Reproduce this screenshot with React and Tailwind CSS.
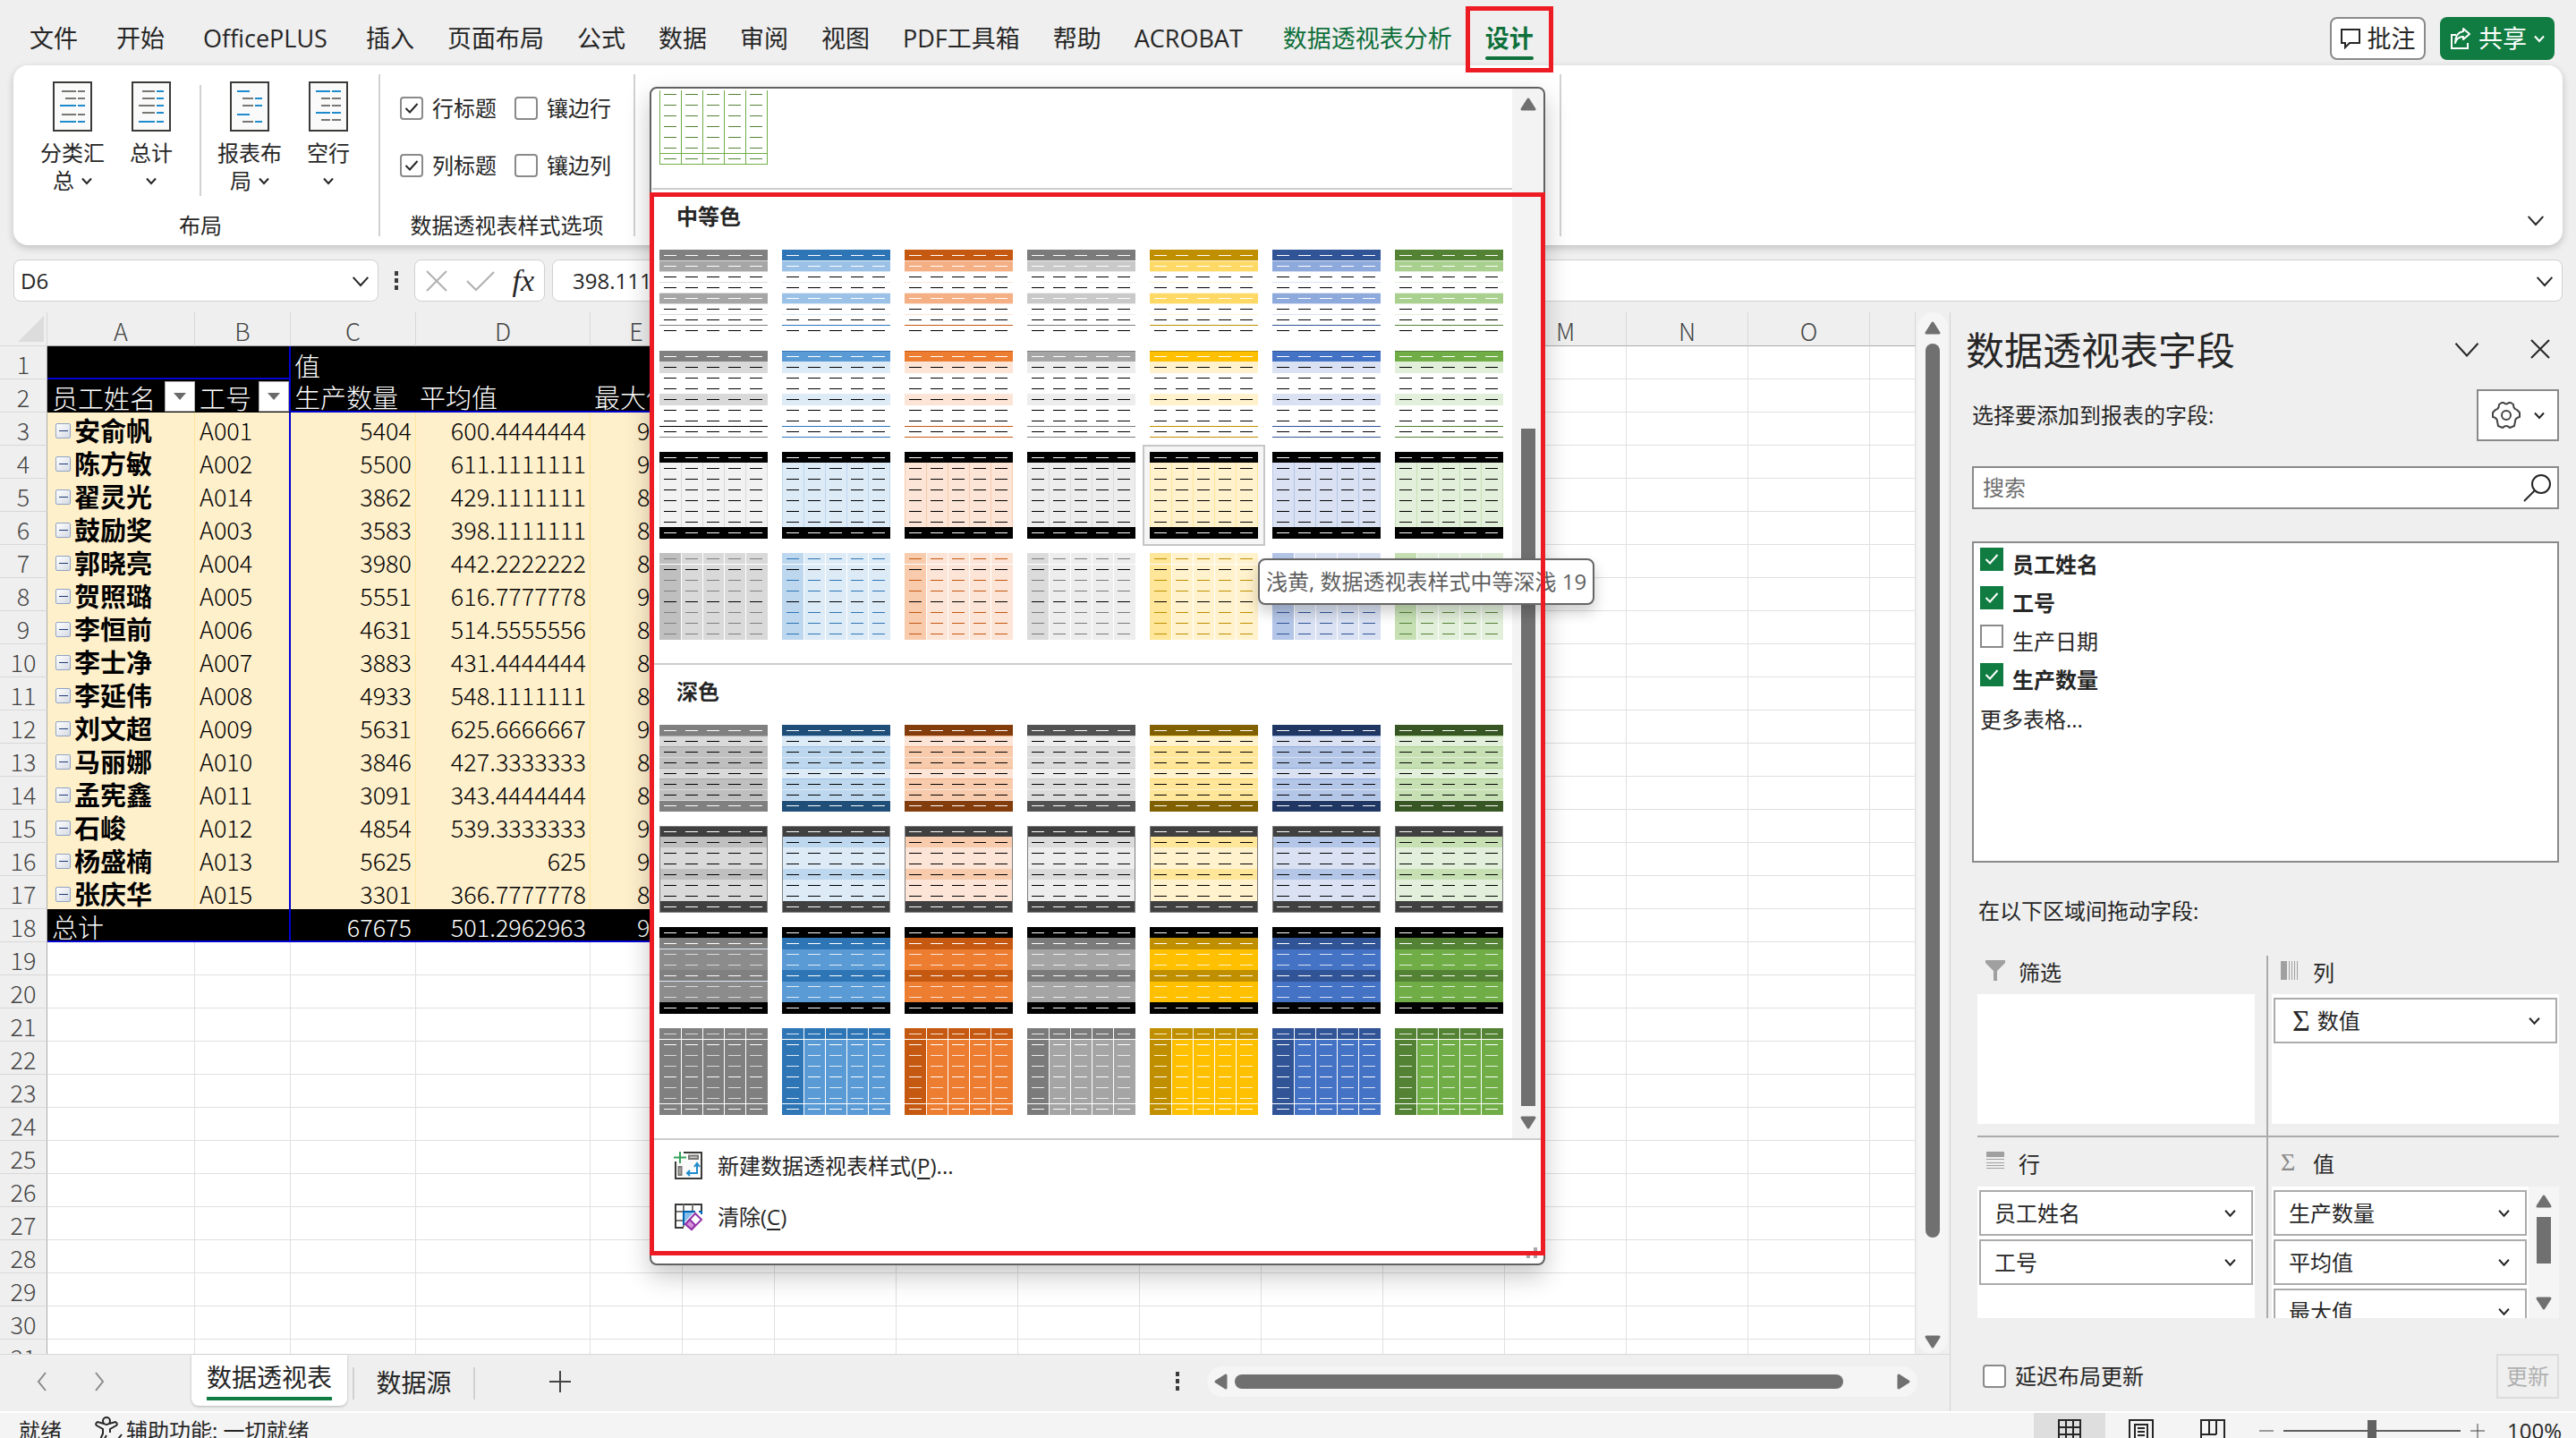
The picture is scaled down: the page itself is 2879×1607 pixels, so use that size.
import clsx from "clsx";

const TABS_LEFT = ["文件", "开始", "OfficePLUS"];
const TABS_RIGHT = ["插入", "页面布局", "公式", "数据", "审阅", "视图", "PDF工具箱", "帮助", "ACROBAT"];

const COLUMNS = [
  { name: "A", width: "w-[165px]" },
  { name: "B", width: "w-[107px]" },
  { name: "C", width: "w-[140px]" },
  { name: "D", width: "w-[195px]" },
  { name: "E", width: "w-[103px]" },
  { name: "F", width: "w-[103px]" },
  { name: "G", width: "w-[136px]" },
  { name: "H", width: "w-[136px]" },
  { name: "I", width: "w-[136px]" },
  { name: "J", width: "w-[136px]" },
  { name: "K", width: "w-[136px]" },
  { name: "L", width: "w-[136px]" },
  { name: "M", width: "w-[136px]" },
  { name: "N", width: "w-[136px]" },
  { name: "O", width: "w-[136px]" },
  { name: "", width: "" },
];

const STAFF = [
  ["安俞帆", "A001", "5404", "600.4444444", "9"],
  ["陈方敏", "A002", "5500", "611.1111111", "9"],
  ["翟灵光", "A014", "3862", "429.1111111", "8"],
  ["鼓励奖", "A003", "3583", "398.1111111", "8"],
  ["郭晓亮", "A004", "3980", "442.2222222", "8"],
  ["贺照璐", "A005", "5551", "616.7777778", "9"],
  ["李恒前", "A006", "4631", "514.5555556", "8"],
  ["李士净", "A007", "3883", "431.4444444", "8"],
  ["李延伟", "A008", "4933", "548.1111111", "8"],
  ["刘文超", "A009", "5631", "625.6666667", "9"],
  ["马丽娜", "A010", "3846", "427.3333333", "8"],
  ["孟宪鑫", "A011", "3091", "343.4444444", "8"],
  ["石峻", "A012", "4854", "539.3333333", "9"],
  ["杨盛楠", "A013", "5625", "625", "9"],
  ["张庆华", "A015", "3301", "366.7777778", "8"],
];

const EMPTY_ROWS = [19, 20, 21, 22, 23, 24, 25, 26, 27, 28, 29, 30, 31];

const THEMES = [
  { name: "灰", base: "#808080", dark: "#808080", mid: "#a6a6a6", light: "#bfbfbf", pale: "#d9d9d9", deep: "#808080", mono: true },
  { name: "蓝", base: "#5b9bd5", dark: "#2e75b6", mid: "#9bc2e6", light: "#bdd7ee", pale: "#ddebf7", deep: "#1f4e78" },
  { name: "橙", base: "#ed7d31", dark: "#c65911", mid: "#f4b084", light: "#f8cbad", pale: "#fce4d6", deep: "#833c0c" },
  { name: "浅灰", base: "#a5a5a5", dark: "#7b7b7b", mid: "#c9c9c9", light: "#dbdbdb", pale: "#ededed", deep: "#525252" },
  { name: "黄", base: "#ffc000", dark: "#bf8f00", mid: "#ffd966", light: "#ffe699", pale: "#fff2cc", deep: "#806000" },
  { name: "深蓝", base: "#4472c4", dark: "#305496", mid: "#8ea9db", light: "#b4c6e7", pale: "#d9e1f2", deep: "#203764" },
  { name: "绿", base: "#70ad47", dark: "#548235", mid: "#a9d08e", light: "#c6e0b4", pale: "#e2efda", deep: "#375623" },
];

const bar = (y, h, fill) => ({ x: 0, y, w: 121, h, fill });
const line = (y, fill) => bar(y, 1, fill);
const column = (x, y, h, fill) => ({ x, y, w: 1, h, fill });

// Each style gives the filled shapes and the dash colour for a row
const STYLES = {
  medium1: (c) => ({
    shapes: [
      bar(0, 12, c.dark),
      bar(13, 11, c.mid),
      bar(49, 11, c.mid),
      ...[12, 24, 36, 48, 60, 72].map((y) => line(y, c.pale)),
      line(84, c.dark),
    ],
    dash: (r) => ([0, 1, 4].includes(r) ? "#fff" : "#000"),
  }),
  medium2: (c) => ({
    shapes: [
      bar(0, 12, c.base),
      line(0, c.dark),
      bar(12, 13, c.pale),
      bar(48, 13, c.pale),
      line(84, c.mono ? "#000" : c.dark),
      line(96, c.dark),
    ],
    dash: (r) => (r === 0 ? "#fff" : "#000"),
  }),
  medium3: (c) => ({
    shapes: [
      bar(12, 72, c.mono ? "#f2f2f2" : c.pale),
      ...[0, 24, 48, 72, 96, 120].map((x) => column(x, 12, 72, c.mono ? c.pale : c.light)),
      bar(0, 12, "#000"),
      bar(84, 13, "#000"),
    ],
    dash: (r) => (r === 0 || r === 7 ? "#fff" : "#000"),
  }),
  medium4: (c) => ({
    shapes: [
      bar(0, 97, c.pale),
      { x: 0, y: 0, w: 24, h: 97, fill: c.light },
      ...[24, 48, 72, 96].map((x) => column(x, 0, 97, "#fff")),
      line(12, "#fff"),
    ],
    dash: (r) => (r === 1 || r === 4 ? "#000" : c.dark),
  }),
  dark1: (c) => ({
    shapes: [
      bar(12, 72, c.light),
      bar(12, 12, c.pale),
      bar(48, 12, c.pale),
      ...[12, 24, 48, 60].map((y) => line(y, c.mid)),
      ...[36, 72, 84].map((y) => line(y, c.pale)),
      bar(0, 12, c.deep),
      bar(85, 12, c.deep),
    ],
    dash: (r) => (r === 0 || r === 7 ? "#fff" : "#000"),
  }),
  dark2: (c) => ({
    shapes: [
      bar(0, 97, "#7f7f7f"),
      ...[
        [1, 11, "#404040"],
        [12, 12, c.light],
        [24, 24, c.pale],
        [48, 12, c.light],
        [60, 24, c.pale],
        [84, 12, "#404040"],
      ].map(([y, h, fill]) => ({ x: 1, y, w: 119, h, fill })),
    ],
    dash: (r) => (r === 0 || r === 7 ? "#fff" : "#000"),
  }),
  dark3: (c) => ({
    shapes: [
      bar(12, 72, c.mono ? "#8c8c8c" : c.base),
      bar(12, 13, c.dark),
      bar(48, 13, c.dark),
      ...(c.mono ? [line(24, "#ddebf7"), line(60, "#ddebf7")] : []),
      bar(0, 12, "#000"),
      bar(84, 13, "#000"),
    ],
    dash: (r) => ([0, 1, 4, 7].includes(r) ? "#fff" : c.pale),
  }),
  dark4: (c) => ({
    shapes: [
      bar(0, 97, c.base),
      bar(0, 12, c.dark),
      { x: 0, y: 0, w: 24, h: 97, fill: c.dark },
      ...[24, 48, 72, 96].map((x) => column(x, 0, 97, "#fff")),
      line(12, "#fff"),
      line(84, "#fff"),
    ],
    dash: (r) => ([1, 4, 7].includes(r) ? "#fff" : c.pale),
  }),
};

function Thumb({ style, theme }) {
  const { shapes, dash } = STYLES[style](theme);
  return (
    <svg width="121" height="97" viewBox="0 0 121 97" shapeRendering="crispEdges" aria-hidden="true">
      {shapes.map((s, i) => (
        <rect key={i} x={s.x} y={s.y} width={s.w} height={s.h} fill={s.fill} />
      ))}
      {[0, 1, 2, 3, 4, 5, 6, 7].map((r) =>
        [0, 1, 2, 3, 4].map((c) => (
          <rect key={`${r}-${c}`} x={5 + c * 24} y={6 + r * 12} width="14" height="1" fill={dash(r)} />
        ))
      )}
    </svg>
  );
}

// Last row of the light section, scrolled partly out of view
function LightThumb() {
  return (
    <svg width="121" height="83" viewBox="0 14 121 83" shapeRendering="crispEdges" aria-hidden="true">
      {[0, 24, 48, 72, 96, 120].map((x) => (
        <rect key={x} x={x} y="14" width="1" height="83" fill="#70ad47" />
      ))}
      <rect x="0" y="84" width="121" height="1" fill="#70ad47" />
      <rect x="0" y="96" width="121" height="1" fill="#70ad47" />
      {[1, 2, 3, 4, 5, 6, 7].map((r) =>
        [0, 1, 2, 3, 4].map((c) => (
          <rect key={`${r}-${c}`} x={5 + c * 24} y={6 + r * 12} width="14" height="1" fill="#548235" />
        ))
      )}
    </svg>
  );
}

function Chevron({ size = 12, stroke = 2, className }) {
  return (
    <svg width={size} height={size} viewBox="0 0 12 12" fill="none" className={className} aria-hidden="true">
      <path d="M1 3.5 6 9 11 3.5" stroke="currentColor" strokeWidth={(stroke * 12) / size} />
    </svg>
  );
}

function Triangle({ down, left, right }) {
  return (
    <svg
      width="20"
      height="20"
      viewBox="0 0 20 20"
      className={clsx("shrink-0", down && "rotate-180", left && "-rotate-90", right && "rotate-90")}
      aria-hidden="true"
    >
      <path d="M10 4 17 15H3Z" fill="#707070" stroke="#707070" strokeWidth="3" strokeLinejoin="round" />
    </svg>
  );
}

function Dots() {
  return (
    <svg width="6" height="22" viewBox="0 0 6 22" fill="#3b3b3b" aria-hidden="true">
      <rect x="1" y="0" width="4" height="5" />
      <rect x="1" y="8" width="4" height="5" />
      <rect x="1" y="16" width="4" height="5" />
    </svg>
  );
}

function CheckOption({ id, label, checked, bold, square }) {
  return (
    <div className={clsx("flex gap-[10px]", square ? "items-start" : "items-center")}>
      <span className={clsx("grid size-[26px] shrink-0 place-items-center", square && "mt-[5px]")}>
        <input
          id={id}
          type="checkbox"
          defaultChecked={checked}
          className={clsx(
            "col-start-1 row-start-1 size-[26px] appearance-none border-2 border-[#8a8a8a] bg-white",
            square ? "rounded-none checked:border-[#107c41] checked:bg-[#107c41]" : "rounded-[4px]"
          )}
        />
        {checked && (
          <svg
            width="16"
            height="16"
            viewBox="0 0 16 16"
            fill="none"
            className={clsx("pointer-events-none col-start-1 row-start-1", square ? "text-white" : "text-[#262626]")}
            aria-hidden="true"
          >
            <path d="M1.500 8 6 12.500 14.500 3" stroke="currentColor" strokeWidth="2" />
          </svg>
        )}
      </span>
      <label htmlFor={id} className={clsx("text-2xl leading-8 whitespace-nowrap", bold && "font-bold", square && "pt-2")}>
        {label}
      </label>
    </div>
  );
}

const G = "#797774";
const B = "#1e8bcd";
const LAYOUT_ICONS = {
  subtotal: [
    [10, 10, 16, G], [28, 10, 8, G],
    [14, 18, 12, G], [28, 18, 8, G],
    [8, 26, 18, B], [28, 26, 8, B],
    [10, 36, 16, G], [28, 36, 8, G],
    [8, 44, 18, B], [28, 44, 8, B],
  ],
  total: [
    [12, 10, 14, G], [28, 10, 8, B],
    [12, 18, 14, G], [28, 18, 8, B],
    [8, 26, 18, G], [28, 26, 8, B],
    [12, 34, 14, G], [28, 34, 8, B],
    [8, 44, 18, B], [28, 44, 8, B],
  ],
  report: [
    [8, 10, 14, B],
    [14, 18, 12, G], [28, 18, 8, B],
    [14, 26, 12, G], [28, 26, 8, B],
    [8, 36, 14, B],
    [14, 44, 12, G], [28, 44, 8, B],
  ],
  blank: [
    [8, 10, 16, B], [26, 10, 10, B],
    [14, 18, 10, G], [26, 18, 10, G],
    [14, 26, 10, G], [26, 26, 10, G],
    [8, 34, 16, B], [26, 34, 10, B],
    [14, 42, 10, G], [26, 42, 10, G],
  ],
};

function LayoutButton({ icon, first, second }) {
  return (
    <button className="flex w-[88px] flex-col items-center">
      <svg width="44" height="56" viewBox="0 0 44 56" shapeRendering="crispEdges" aria-hidden="true">
        <rect x="1" y="1" width="42" height="54" fill="#fafafa" stroke="#3a3a38" strokeWidth="2" />
        {LAYOUT_ICONS[icon].map(([x, y, w, fill], i) => (
          <rect key={i} x={x} y={y} width={w} height="2" fill={fill} />
        ))}
      </svg>
      <span className="mt-2 text-2xl leading-[31px]">{first}</span>
      <span className="flex h-[31px] items-center gap-2 text-2xl leading-[31px]">
        {second}
        <Chevron size={12} />
      </span>
    </button>
  );
}

function Tab({ children, active, tool }) {
  return (
    <button
      className={clsx(
        "relative h-12 text-[27px] leading-[48px] whitespace-nowrap",
        (tool || active) && "text-[#0f703b]",
        active && "font-bold"
      )}
    >
      {children}
      {active && <span className="absolute inset-x-0 bottom-0 h-1 rounded-full bg-[#0f703b]" />}
      {active && <span className="absolute -inset-x-[22px] -top-3 -bottom-[14px] border-[5px] border-[#ed1c24]" />}
    </button>
  );
}

function Header() {
  return (
    <header className="relative z-20 flex h-[73px] shrink-0 items-start pt-[19px] pr-6 pl-[33px]">
      <nav className="flex gap-[37px]">
        <div className="mr-[6px] flex gap-[43px]">
          {TABS_LEFT.map((t) => (
            <Tab key={t}>{t}</Tab>
          ))}
        </div>
        {TABS_RIGHT.map((t) => (
          <Tab key={t}>{t}</Tab>
        ))}
        <div className="ml-2 flex gap-[37px]">
          <Tab tool>数据透视表分析</Tab>
          <Tab active>设计</Tab>
        </div>
      </nav>
      <div className="ml-auto flex gap-4">
        <button className="flex h-12 w-[107px] items-center justify-center gap-2 rounded-lg border-2 border-[#8a8a8a] bg-white text-[27px] leading-8">
          <svg width="22" height="24" viewBox="0 0 22 24" fill="none" stroke="#262626" strokeWidth="2" aria-hidden="true">
            <path d="M1 2H21V17H10L5 22V17H1Z" />
          </svg>
          批注
        </button>
        <button className="flex h-12 w-[128px] items-center justify-center gap-2 rounded-lg bg-[#107c41] text-[27px] leading-8 text-white">
          <svg width="24" height="26" viewBox="0 0 24 26" fill="none" stroke="#fff" strokeWidth="2" aria-hidden="true">
            <path d="M7 9H2V24H20V18" />
            <path d="M15 2 22 8 15 14V11C10 11 7 14 6 18 6 11 9 6 15 5Z" strokeLinejoin="round" />
          </svg>
          共享
          <Chevron size={12} />
        </button>
      </div>
    </header>
  );
}

function GalleryTiles({ styles }) {
  return (
    <div className="grid w-[959px] grid-cols-7">
      {styles.map((style) =>
        THEMES.map((theme) => {
          const hovered = style === "medium3" && theme.name === "黄";
          return (
            <div key={style + theme.name} className="relative h-[113px]">
              <button
                aria-label={theme.name}
                className={clsx(
                  "flex size-full items-center justify-center border-2",
                  hovered ? "border-[#c6c6c6] bg-[#f5f5f5]" : "border-transparent"
                )}
              >
                <Thumb style={style} theme={theme} />
              </button>
              {hovered && (
                <div
                  role="tooltip"
                  className="absolute top-[127px] left-[129px] z-10 flex h-[52px] items-center rounded-lg border-2 border-[#666] bg-white px-[7px] text-2xl leading-8 whitespace-nowrap text-[#5f5f5f] shadow-[0_8px_16px_rgba(0,0,0,0.2)]"
                >
                  浅黄, 数据透视表样式中等深浅 19
                </div>
              )}
            </div>
          );
        })
      )}
    </div>
  );
}

function StyleGallery() {
  return (
    <div className="absolute top-6 left-4 z-20 w-[1001px] rounded-lg border-2 border-[#616161] bg-white pb-[22px] shadow-[0_12px_28px_rgba(0,0,0,0.22)]">
      <div className="flex">
        <div className="w-[962px] shrink-0 pl-[1px]">
          <div className="h-[113px] border-b-2 border-[#cdcdcd] pt-[2px] pl-2">
            <LightThumb />
          </div>
          <section className="border-b-2 border-[#cdcdcd] pb-[18px]">
            <h2 className="pl-[27px] text-2xl leading-[59px] font-bold">中等色</h2>
            <GalleryTiles styles={["medium1", "medium2", "medium3", "medium4"]} />
          </section>
          <section className="pb-[18px]">
            <h2 className="pl-[27px] text-2xl leading-[59px] font-bold">深色</h2>
            <GalleryTiles styles={["dark1", "dark2", "dark3", "dark4"]} />
          </section>
        </div>
        <div className="flex flex-1 flex-col items-center rounded-tr-lg bg-[#f3f3f3] py-2">
          <Triangle />
          <div className="mt-[352px] w-4 flex-1 bg-[#707070]" />
          <div className="mt-2 h-5">
            <Triangle down />
          </div>
        </div>
      </div>
      <div className="border-t-2 border-[#cdcdcd] pb-[2px]">
        <button className="flex h-[57px] w-full items-center gap-4 pl-[25px] text-2xl leading-8">
          <svg width="33" height="33" viewBox="0 0 33 33" fill="none" aria-hidden="true">
            <path d="M11 2H31V31H2V12" fill="#fafafa" stroke="#3a3a38" strokeWidth="2" />
            <path d="M7 1V14M0 7.500H14" stroke="#33a35a" strokeWidth="2" />
            <path d="M17 5.500H27V9H17Z M5.500 18V27H8.500V18Z" fill="#d0cecb" stroke="#797774" strokeWidth="2" />
            <path d="M26 15V25H16M23 18 26 14 29 18M18 22 15 25 18 28" stroke="#1e8bcd" strokeWidth="2" />
          </svg>
          <span>
            新建数据透视表样式(<u className="underline-offset-4">P</u>)...
          </span>
        </button>
        <button className="flex h-[57px] w-full items-center gap-4 pl-[25px] text-2xl leading-8">
          <svg width="33" height="33" viewBox="0 0 33 33" fill="none" aria-hidden="true">
            <path d="M2 3H31V12M2 2V29H11" stroke="#3a3a38" strokeWidth="2" />
            <path d="M11 3V28M21 3V11M3 11H11M3 21H11" stroke="#797774" strokeWidth="2" />
            <path d="M11 11H23L11 24Z" fill="#83beec" />
            <path d="M11 26V11H24M28 11H31V14" stroke="#0063b1" strokeWidth="2" />
            <path d="M24 13 31 20 20 31 13 25Z" fill="#fff" stroke="#9332a8" strokeWidth="2" />
            <path d="M18 20 24 26 20 31 13 25Z" fill="#d492d8" stroke="#9332a8" strokeWidth="2" />
          </svg>
          <span>
            清除(<u className="underline-offset-4">C</u>)
          </span>
        </button>
      </div>
      <svg width="12" height="12" viewBox="0 0 12 12" fill="#a6a6a6" className="absolute right-[7px] bottom-[6px]" aria-hidden="true">
        <rect x="8" y="0" width="4" height="4" />
        <rect x="8" y="8" width="4" height="4" />
        <rect x="0" y="8" width="4" height="4" />
      </svg>
      {/* Highlight frame */}
      <div className="pointer-events-none absolute -inset-x-[2px] top-[116px] bottom-[9px] z-20 border-[5px] border-[#ed1c24]" />
    </div>
  );
}

function Ribbon() {
  return (
    <section className="relative z-10 mx-[15px] flex h-[201px] shrink-0 rounded-2xl bg-white shadow-[0_3px_8px_rgba(0,0,0,0.2)]">
      <div className="flex flex-col justify-between pt-[18px] pr-3 pb-[6px] pl-[22px]">
        <div className="flex">
          <LayoutButton icon="subtotal" first="分类汇" second="总" />
          <LayoutButton icon="total" first="总计" />
          <div className="mx-[10px] mt-1 h-[124px] w-[2px] bg-[#d1d1d1]" />
          <LayoutButton icon="report" first="报表布" second="局" />
          <LayoutButton icon="blank" first="空行" />
        </div>
        <p className="text-center text-2xl leading-8">布局</p>
      </div>
      <div className="my-[10px] w-[2px] bg-[#d1d1d1]" />
      <div className="flex w-[283px] flex-col justify-between pt-8 pb-[6px]">
        <div className="grid grid-cols-[128px_1fr] gap-y-8 pl-[22px]">
          <CheckOption id="row-header" label="行标题" checked />
          <CheckOption id="banded-row" label="镶边行" />
          <CheckOption id="col-header" label="列标题" checked />
          <CheckOption id="banded-col" label="镶边列" />
        </div>
        <p className="text-center text-2xl leading-8">数据透视表样式选项</p>
      </div>
      <div className="my-[10px] w-[2px] bg-[#d1d1d1]" />
      <div className="relative w-[1033px]">
        <StyleGallery />
      </div>
      <div className="my-[10px] w-[2px] bg-[#d1d1d1]" />
      <button aria-label="折叠功能区" className="mt-auto mr-5 mb-[18px] ml-auto">
        <Chevron size={20} />
      </button>
    </section>
  );
}

function FormulaBar() {
  return (
    <div className="mx-[15px] mt-4 flex h-[47px] shrink-0 items-stretch">
      <div className="flex w-[408px] items-center rounded-lg border border-[#d1d1d1] bg-white pr-[9px] pl-[7px]">
        <input aria-label="名称框" defaultValue="D6" className="min-w-0 flex-1 text-2xl leading-8 outline-none" />
        <Chevron size={20} />
      </div>
      <div className="flex w-10 items-center justify-center">
        <Dots />
      </div>
      <div className="flex w-[146px] items-center justify-between rounded-lg border border-[#d1d1d1] bg-white px-[11px]">
        <button aria-label="取消">
          <svg width="26" height="26" viewBox="0 0 26 26" stroke="#b0b0b0" strokeWidth="2" aria-hidden="true">
            <path d="M2 2 24 24M24 2 2 24" />
          </svg>
        </button>
        <button aria-label="输入">
          <svg width="32" height="26" viewBox="0 0 32 26" fill="none" stroke="#b0b0b0" strokeWidth="2" aria-hidden="true">
            <path d="M1 13 11 23 31 3" />
          </svg>
        </button>
        <button className="font-['Liberation_Serif',serif] text-[34px] leading-9 text-[#262626] italic">fx</button>
      </div>
      <div className="ml-2 flex flex-1 items-center rounded-lg border border-[#d1d1d1] bg-white pr-[9px] pl-[22px]">
        <input aria-label="编辑栏" defaultValue="398.111111111111" className="min-w-0 flex-1 text-2xl leading-8 outline-none" />
        <Chevron size={20} />
      </div>
    </div>
  );
}

function RowHead({ n }) {
  return (
    <th className="border-r border-b border-r-[#ababab] border-b-[#d8d8d8] bg-[#efefef] p-0 pt-1 text-center leading-8 font-light text-[#444]">
      {n}
    </th>
  );
}

function Blanks({ count }) {
  return Array.from({ length: count }, (_, i) => (
    <td key={i} className="border-r border-b border-[#e0e0e0] bg-white p-0" />
  ));
}

function FilterHead({ label, last }) {
  return (
    <td className={clsx("border-b border-b-black p-0 pl-[5px]", last && "border-r-2 border-r-[#0000d0]")}>
      <div className="flex h-9 items-end justify-between">
        <span className="text-[29px] leading-8">{label}</span>
        <button aria-label={`筛选${label}`} className="flex size-[34px] items-center justify-center border border-[#ababab] bg-white">
          <svg width="14" height="8" viewBox="0 0 14 8" fill="#6a6a6a" aria-hidden="true">
            <path d="M0 0H14L7 8Z" />
          </svg>
        </button>
      </div>
    </td>
  );
}

function Sheet() {
  return (
    <div className="min-w-0 flex-1 overflow-hidden bg-white">
      <table className="w-full table-fixed border-separate border-spacing-0 font-['Noto_Sans_CJK_SC',sans-serif] text-[27px] font-light">
        <colgroup>
          <col className="w-[53px]" />
          {COLUMNS.map((c, i) => (
            <col key={i} className={c.width} />
          ))}
        </colgroup>
        <thead>
          <tr className="h-[38px] bg-[#efefef] text-[#444]">
            <th className="border-r border-b border-r-[#d8d8d8] border-b-[#d8d8d8] p-0">
              <svg width="30" height="29" viewBox="0 0 30 29" className="ml-5" fill="#dcdcdc" aria-hidden="true">
                <path d="M29 0V29H0Z" />
              </svg>
            </th>
            {COLUMNS.map((c, i) => (
              <th key={i} className="border-r border-b border-r-[#d8d8d8] border-b-[#ababab] p-0 pt-1 leading-8 font-light">
                {c.name}
              </th>
            ))}
          </tr>
        </thead>
        <tbody>
          <tr className="h-[37px] bg-black text-white">
            <RowHead n={1} />
            <td className="border-b-2 border-[#0000d0] p-0" />
            <td className="border-r-2 border-b-2 border-[#0000d0] p-0" />
            <td className="p-0 pt-1 pl-1 text-[29px] leading-8">值</td>
            <td colSpan={2} className="p-0" />
            <Blanks count={11} />
          </tr>
          <tr className="h-[37px] bg-black text-white">
            <RowHead n={2} />
            <FilterHead label="员工姓名" />
            <FilterHead label="工号" last />
            <td className="border-b-2 border-[#0000d0] p-0 pt-1 pl-1 text-[29px] leading-[31px]">生产数量</td>
            <td className="border-b-2 border-[#0000d0] p-0 pt-1 pl-1 text-[29px] leading-[31px]">平均值</td>
            <td className="border-b-2 border-[#0000d0] p-0 pt-1 pl-1 text-[29px] leading-[31px]">最大值</td>
            <Blanks count={11} />
          </tr>
          {STAFF.map(([name, id, count, avg, max], i) => (
            <tr key={id} className="h-[37px] bg-[#fff0cc] text-black">
              <RowHead n={i + 3} />
              <td className="border-r border-[#ffe699] p-0 pl-[9px]">
                <div className="flex items-center gap-1">
                  <button
                    aria-label="折叠"
                    className="mt-1 flex size-[17px] items-center justify-center rounded-[2px] border border-[#8fa3c4] bg-linear-to-br from-white to-[#d5dae3]"
                  >
                    <span className="h-[1px] w-[10px] bg-[#1f3b78]" />
                  </button>
                  <span className="text-[29px] leading-8 font-bold">{name}</span>
                </div>
              </td>
              <td className="border-r-2 border-[#0000d0] p-0 pt-[2px] pl-[5px] leading-8">{id}</td>
              <td className="border-r border-[#ffe699] p-0 pt-[2px] pr-1 text-right leading-8">{count}</td>
              <td className="border-r border-[#ffe699] p-0 pt-[2px] pr-1 text-right leading-8">{avg}</td>
              <td className="p-0 pt-[2px] pl-[52px] leading-8">{max}</td>
              <Blanks count={11} />
            </tr>
          ))}
          <tr className="h-[37px] bg-black text-white">
            <RowHead n={18} />
            <td className="border-b-2 border-[#0000d0] p-0 pt-1 pl-[5px] text-[29px] leading-[31px]">总计</td>
            <td className="border-r-2 border-b-2 border-[#0000d0] p-0" />
            <td className="border-b-2 border-[#0000d0] p-0 pt-1 pr-[5px] text-right leading-[31px]">67675</td>
            <td className="border-b-2 border-[#0000d0] p-0 pt-1 pr-[5px] text-right leading-[31px]">501.2962963</td>
            <td className="border-b-2 border-[#0000d0] p-0 pt-1 pl-[52px] leading-[31px]">9</td>
            <Blanks count={11} />
          </tr>
          {EMPTY_ROWS.map((n) => (
            <tr key={n} className="h-[37px]">
              <RowHead n={n} />
              <Blanks count={16} />
            </tr>
          ))}
        </tbody>
      </table>
    </div>
  );
}

function SheetTabs() {
  return (
    <div className="flex h-16 shrink-0 border-t border-[#d8d8d8] bg-[#efefef]">
      <div className="flex w-[214px] items-center gap-[54px] pb-1 pl-[41px] text-[#8a8a8a]">
        <button aria-label="上一个工作表">
          <svg width="11" height="24" viewBox="0 0 11 24" fill="none" stroke="currentColor" strokeWidth="2" aria-hidden="true">
            <path d="M10 2 2 12 10 22" />
          </svg>
        </button>
        <button aria-label="下一个工作表">
          <svg width="11" height="24" viewBox="0 0 11 24" fill="none" stroke="currentColor" strokeWidth="2" aria-hidden="true">
            <path d="M1 2 9 12 1 22" />
          </svg>
        </button>
      </div>
      <button className="h-[57px] rounded-b-lg bg-white px-[17px] shadow-[0_1px_3px_rgba(0,0,0,0.25)]">
        <span className="block border-b-4 border-[#107c41] pb-1 text-[28px] leading-9">数据透视表</span>
      </button>
      <div className="mt-[14px] ml-[6px] h-9 w-[2px] bg-[#d1d1d1]" />
      <button className="h-[62px] w-[133px] text-[28px] leading-[62px]">数据源</button>
      <div className="mt-[14px] h-9 w-[2px] bg-[#d1d1d1]" />
      <button aria-label="新建工作表" className="mb-1 ml-[83px]">
        <svg width="24" height="24" viewBox="0 0 24 24" stroke="#444" strokeWidth="2" aria-hidden="true">
          <path d="M12 0V24M0 12H24" />
        </svg>
      </button>
      <div className="ml-auto flex items-center gap-[30px] pb-1">
        <Dots />
        <div className="mr-9 flex h-[34px] w-[794px] items-center rounded-full bg-[#f5f5f5] px-[6px]">
          <Triangle left />
          <div className="ml-[5px] h-4 w-[680px] rounded-full bg-[#707070]" />
          <div className="ml-auto h-5">
            <Triangle right />
          </div>
        </div>
      </div>
    </div>
  );
}

function FieldItem({ children }) {
  return (
    <button className="flex h-[51px] w-full shrink-0 items-center justify-between border-2 border-[#ababab] bg-white pr-[17px] pl-[15px] text-2xl leading-8">
      <span className="flex items-center gap-2">{children}</span>
      <Chevron size={13} />
    </button>
  );
}

function FieldPane() {
  return (
    <aside className="flex w-[700px] shrink-0 flex-col border-l border-[#d1d1d1] pr-[19px] pl-6 text-2xl">
      <div className="-ml-[7px] flex h-[86px] shrink-0 items-center pr-1">
        <h1 className="text-[43px] leading-[56px]">数据透视表字段</h1>
        <div className="mb-1 ml-auto flex items-center gap-14 pr-[6px]">
          <button aria-label="任务窗格选项">
            <Chevron size={30} />
          </button>
          <button aria-label="关闭">
            <svg width="22" height="22" viewBox="0 0 22 22" stroke="#262626" strokeWidth="2" aria-hidden="true">
              <path d="M1 1 21 21M21 1 1 21" />
            </svg>
          </button>
        </div>
      </div>
      <div className="flex h-[58px] shrink-0 items-center justify-between">
        <p className="leading-8">选择要添加到报表的字段:</p>
        <button aria-label="工具" className="flex h-[58px] w-[92px] items-center justify-center gap-[14px] border-2 border-[#8a8a8a] bg-white">
          <svg width="34" height="32" viewBox="0 0 34 32" fill="none" stroke="#444" strokeWidth="2" aria-hidden="true">
            <path d="M12 2H14Q17 5 20 2H22L25 4Q25 9 29 10L32 13V18Q27 19 27 23L26 28 21 30Q17 26 13 30L8 28 7 23Q7 19 2 18V13L5 10Q9 9 9 4Z" strokeLinejoin="round" />
            <circle cx="17" cy="16" r="5" />
          </svg>
          <Chevron size={12} />
        </button>
      </div>
      <div className="mt-7 flex h-12 shrink-0 items-center border-2 border-[#8a8a8a] bg-white pr-[6px] pl-[10px]">
        <input aria-label="搜索" placeholder="搜索" className="min-w-0 flex-1 text-2xl leading-8 outline-none placeholder:text-[#6e6e6e]" />
        <svg width="32" height="32" viewBox="0 0 32 32" fill="none" stroke="#262626" strokeWidth="2" aria-hidden="true">
          <circle cx="20" cy="12" r="10" />
          <path d="M13 19 1 31" />
        </svg>
      </div>
      <div className="mt-9 flex min-h-0 flex-1 flex-col border-2 border-[#8a8a8a] bg-white px-[7px]">
        {[
          ["f-name", "员工姓名", true],
          ["f-id", "工号", true],
          ["f-date", "生产日期", false],
          ["f-count", "生产数量", true],
        ].map(([id, label, on]) => (
          <div key={id} className="h-[43px]">
            <CheckOption id={id} label={label} checked={on} bold={on} square />
          </div>
        ))}
        <a href="#more" className="mt-[9px] leading-8">更多表格...</a>
      </div>
      <p className="shrink-0 pt-1 pl-[7px] leading-[100px]">在以下区域间拖动字段:</p>
      <div className="ml-[6px] grid shrink-0 grid-cols-2">
        <div className="border-r-2 border-b-2 border-[#ababab] pr-[13px] pb-[13px]">
          <div className="flex h-[43px] items-start gap-[14px] pl-2 leading-[38px]">
            <svg width="24" height="26" viewBox="0 0 24 26" fill="#a0a0a0" className="mt-1" aria-hidden="true">
              <path d="M1 1H23V4L14 13V24H10V13L1 4Z" />
            </svg>
            筛选
          </div>
          <div className="h-[145px] bg-white" />
        </div>
        <div className="border-b-2 border-[#ababab] pb-[13px] pl-1">
          <div className="flex h-[43px] items-start gap-4 pl-[10px] leading-[38px]">
            <svg width="20" height="22" viewBox="0 0 20 22" fill="#a0a0a0" className="mt-[6px]" aria-hidden="true">
              <path d="M0 0H7V21H0ZM9 0H10V21H9ZM12 0H13V21H12ZM15 0H16V21H15ZM18 0H19V21H18Z" />
            </svg>
            列
          </div>
          <div className="h-[145px] bg-white px-[2px] pt-1">
            <FieldItem>
              <span className="pl-1 font-['Liberation_Serif',serif] text-[34px]">Σ</span>数值
            </FieldItem>
          </div>
        </div>
        <div className="border-r-2 border-[#ababab] pr-[13px]">
          <div className="flex h-[55px] items-center gap-4 pl-[10px] leading-[38px]">
            <svg width="20" height="20" viewBox="0 0 20 20" fill="#a0a0a0" className="mb-1" aria-hidden="true">
              <path d="M0 0H20V6H0ZM0 8H20V9H0ZM0 12H20V13H0ZM0 15H20V16H0ZM0 18H20V19H0Z" />
            </svg>
            <span className="pt-1">行</span>
          </div>
          <div className="flex h-[147px] flex-col gap-1 overflow-hidden bg-white px-[2px] pt-1">
            <FieldItem>员工姓名</FieldItem>
            <FieldItem>工号</FieldItem>
          </div>
        </div>
        <div className="pl-1">
          <div className="flex h-[55px] items-center gap-4 pl-[10px] leading-[38px]">
            <span className="w-5 font-['Liberation_Serif',serif] text-[28px] text-[#8a8a8a]">Σ</span>
            <span className="pt-1">值</span>
          </div>
          <div className="flex h-[147px] overflow-hidden bg-white">
            <div className="flex flex-1 flex-col gap-1 px-[2px] pt-1">
              <FieldItem>生产数量</FieldItem>
              <FieldItem>平均值</FieldItem>
              <FieldItem>最大值</FieldItem>
            </div>
            <div className="flex w-[34px] flex-col items-center bg-[#f5f5f5] py-[7px]">
              <Triangle />
              <div className="mt-[7px] h-[52px] w-4 bg-[#707070]" />
              <div className="mt-auto h-5">
                <Triangle down />
              </div>
            </div>
          </div>
        </div>
      </div>
      <div className="mt-10 mb-[14px] flex h-[50px] shrink-0 items-center justify-between pl-3">
        <CheckOption id="defer" label="延迟布局更新" />
        <button disabled className="h-[50px] w-[70px] border-2 border-[#dcdcdc] leading-8 text-[#b0b0b0]">
          更新
        </button>
      </div>
    </aside>
  );
}

function StatusBar() {
  return (
    <footer className="h-[30px] shrink-0 overflow-hidden border-t-2 border-white bg-[#f4f4f4] text-2xl">
      <div className="flex h-10 items-center pr-4 pl-[21px]">
        <span className="leading-10">就绪</span>
        <svg width="32" height="32" viewBox="0 0 32 32" fill="none" stroke="#262626" strokeWidth="2" className="ml-9" aria-hidden="true">
          <circle cx="14" cy="5" r="4" />
          <path d="M11 8 4 6Q1 8 3 10L10 14V19L6 28Q8 31 10 28L14 21M17 8 24 6Q27 8 25 10L18 14V18M20 25 24 29 31 20" />
        </svg>
        <span className="ml-1 leading-10">辅助功能: 一切就绪</span>
        <div className="ml-auto flex h-10 items-center">
          <button aria-label="普通" className="flex h-10 w-20 items-center justify-center bg-[#dedede]">
            <svg width="26" height="26" viewBox="0 0 26 26" fill="none" stroke="#262626" strokeWidth="2" aria-hidden="true">
              <path d="M1 1H25V25H1ZM9 1V25M17 1V25M1 9H25M1 17H25" />
            </svg>
          </button>
          <button aria-label="页面布局" className="flex h-10 w-20 items-center justify-center">
            <svg width="28" height="28" viewBox="0 0 28 28" fill="none" stroke="#262626" strokeWidth="2" aria-hidden="true">
              <path d="M1 2H27V27H1ZM7 7H21V27H7ZM10 11H18M10 15H18M10 19H18M10 23H18" />
            </svg>
          </button>
          <button aria-label="分页预览" className="flex h-10 w-20 items-center justify-center">
            <svg width="28" height="28" viewBox="0 0 28 28" fill="none" stroke="#262626" strokeWidth="2" aria-hidden="true">
              <path d="M1 27V2H27V27M10 2V18M18 2V18M1 18H18" />
            </svg>
          </button>
          <button aria-label="缩小" className="ml-3">
            <svg width="16" height="16" viewBox="0 0 16 16" stroke="#444" strokeWidth="1" aria-hidden="true">
              <path d="M0 8H16" />
            </svg>
          </button>
          <input
            type="range"
            aria-label="缩放"
            defaultValue="50"
            className="mx-[11px] h-[2px] w-[198px] appearance-none bg-[#616161] [&::-webkit-slider-thumb]:h-6 [&::-webkit-slider-thumb]:w-[10px] [&::-webkit-slider-thumb]:appearance-none [&::-webkit-slider-thumb]:bg-[#616161]"
          />
          <button aria-label="放大">
            <svg width="16" height="16" viewBox="0 0 16 16" stroke="#444" strokeWidth="1" aria-hidden="true">
              <path d="M0 8H16M8 0V16" />
            </svg>
          </button>
          <span className="ml-[25px] leading-10">100%</span>
        </div>
      </div>
    </footer>
  );
}

export default function App() {
  return (
    <div className="flex h-screen flex-col overflow-hidden bg-[#efefef] font-['Open_Sans','Noto_Sans_CJK_SC',sans-serif] text-[#262626]">
      <Header />
      <Ribbon />
      <FormulaBar />
      <main className="mt-3 flex min-h-0 flex-1">
        <div className="flex min-w-0 flex-1 flex-col">
          <div className="flex min-h-0 flex-1">
            <Sheet />
            <div className="mx-[2px] flex w-[34px] flex-col items-center rounded-full bg-[#f5f5f5] pt-2 pb-1">
              <Triangle />
              <div className="mt-[7px] mb-[106px] w-4 flex-1 rounded-full bg-[#707070]" />
              <div className="h-5">
                <Triangle down />
              </div>
            </div>
          </div>
          <SheetTabs />
        </div>
        <FieldPane />
      </main>
      <StatusBar />
    </div>
  );
}
